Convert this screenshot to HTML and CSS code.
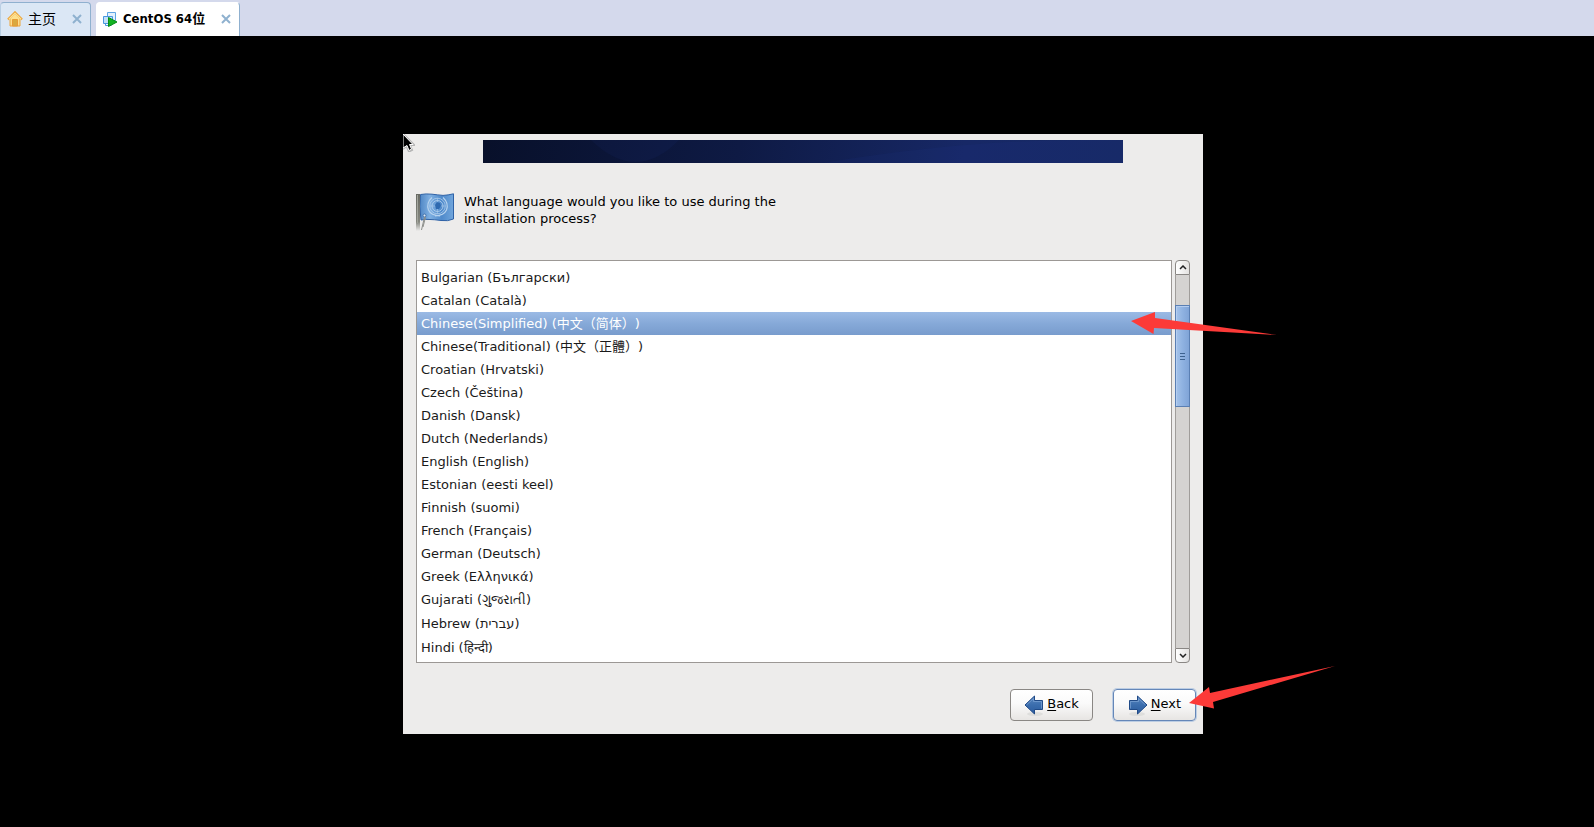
FILE: index.html
```html
<!DOCTYPE html>
<html lang="en">
<head>
<meta charset="utf-8">
<title>CentOS 64位</title>
<link rel="stylesheet" href="styles.css">
</head>
<body>
<nav class="tabs">
  <div class="tab">
    <svg class="tab-icon" viewBox="0 0 16 16" aria-hidden="true">
      <path d="M3 8v7h10V8L8 3z" fill="#fde08e" stroke="#eca53c"/>
      <path d="M1 8.500L8 1.500l7 7" fill="none" stroke="#eca53c" stroke-width="2.400"/>
      <path d="M2 8.200L8 2.300l6 5.900" fill="none" stroke="#fde39a" stroke-width="1.200"/>
      <path d="M5.500 8.500h5V15h-5z" fill="#d9a93f" stroke="#e79b35"/>
    </svg>
    <a class="tab-name" href="#home" lang="zh">主页</a>
    <button class="tab-close" aria-label="Close 主页"><svg viewBox="0 0 10 10"><path d="M1 1l8 8M9 1L1 9"/></svg></button>
  </div>
  <div class="tab tab-active">
    <svg class="tab-icon" viewBox="0 0 16 16" aria-hidden="true">
      <path d="M5.500 1.500h8v8h-8z" fill="#e4f1fd" stroke="#5fa5e4"/>
      <path d="M1.500 5.500h9v7h-9z" fill="#c3e0fa" stroke="#4a97de"/>
      <path d="M3.500 12.500v2h6" fill="none" stroke="#4a97de"/>
      <path d="M6.500 6.500v9L15 11z" fill="#12b321" stroke="#078b16"/>
    </svg>
    <a class="tab-name" href="#centos" lang="zh">CentOS 64位</a>
    <button class="tab-close" aria-label="Close CentOS 64位"><svg viewBox="0 0 10 10"><path d="M1 1l8 8M9 1L1 9"/></svg></button>
  </div>
</nav>
<main class="stage">
  <section class="dialog">
    <div class="banner"><svg viewBox="0 0 640 23" preserveAspectRatio="none" aria-hidden="true"><path d="M108 0q45 44 88 0z"/><path d="M340 23Q480 0 600 0h40v23z"/></svg></div>
    <header class="question">
      <svg class="flag" viewBox="0 0 38 38" aria-hidden="true">
        <defs>
          <linearGradient id="cloth" x2="1"><stop offset="0" stop-color="#4f86c4"/><stop offset=".3" stop-color="#7fb0e2"/><stop offset=".65" stop-color="#4f8acb"/><stop offset="1" stop-color="#71a6dc"/></linearGradient>
          <linearGradient id="pole" x2="0" y2="1"><stop offset="0" stop-color="#686a63"/><stop offset=".75" stop-color="#85877f"/><stop offset="1" stop-color="#85877f" stop-opacity="0"/></linearGradient>
        </defs>
        <path d="M4.500 1.500Q10 .5 16 1.200T27 2.400Q32 2.200 37.500 .8V26Q32 28.500 25 27.500T14 26.500Q9 26 5 27Q2.800 13 4.500 1.500z" fill="url(#cloth)" stroke="#2f62a6"/>
        <g fill="none" stroke="#b7d3ee" stroke-width="1.200">
          <circle cx="21.500" cy="13" r="5.500" stroke-width=".8"/>
          <circle cx="21.500" cy="13" r="7.800" stroke-width=".7"/>
          <path d="M16 4.500Q10 10 12.500 17Q15 22.500 24 23M27 4.500Q33 10 30.500 17Q28 22.500 19 23"/>
          <path d="M21.500 5v16M14 13h15" stroke-width=".5"/>
        </g>
        <path d="M19 12l2-3 3 1 1 3-2 3h-3z" fill="#2f6ab0"/>
        <rect x="0" y="1" width="4" height="37" fill="url(#pole)"/>
        <path d="M1.500 2v28" stroke="#a3a59c"/>
        <circle cx="8.500" cy="22.500" r="1.500" fill="#dce8f4" stroke="#4672a8"/>
        <path d="M8.500 24L5.500 37M9.500 24L7 34" stroke="#8c8e8a" fill="none"/>
      </svg>
      <p class="prompt">What language would you like to use during the installation process?</p>
    </header>
    <div class="picker">
      <ul class="list" role="listbox" aria-label="Language" tabindex="0">
        <li role="option">Bulgarian (Български)</li>
        <li role="option">Catalan (Català)</li>
        <li role="option" class="selected" aria-selected="true">Chinese(Simplified) (<span class="cjk">中文（简体）</span>)</li>
        <li role="option">Chinese(Traditional) (<span class="cjk">中文（正體）</span>)</li>
        <li role="option">Croatian (Hrvatski)</li>
        <li role="option">Czech (Čeština)</li>
        <li role="option">Danish (Dansk)</li>
        <li role="option">Dutch (Nederlands)</li>
        <li role="option">English (English)</li>
        <li role="option">Estonian (eesti keel)</li>
        <li role="option">Finnish (suomi)</li>
        <li role="option">French (Français)</li>
        <li role="option">German (Deutsch)</li>
        <li role="option">Greek (Ελληνικά)</li>
        <li role="option">Gujarati (ગુજરાતી)</li>
        <li role="option" class="tall">Hebrew (עברית)</li>
        <li role="option" class="tall">Hindi (हिन्दी)</li>
      </ul>
      <div class="scrollbar">
        <button class="step step-up" aria-label="Scroll up"><svg viewBox="0 0 8 5"><path d="M1 4l3-3 3 3"/></svg></button>
        <div class="track"><div class="thumb"><i></i><i></i><i></i></div></div>
        <button class="step step-down" aria-label="Scroll down"><svg viewBox="0 0 8 5"><path d="M1 1l3 3 3-3"/></svg></button>
      </div>
    </div>
    <footer class="actions">
      <button class="action">
        <svg class="action-icon" viewBox="0 0 20 22" aria-hidden="true">
          <defs><linearGradient id="blue" x2="0" y2="1"><stop offset="0" stop-color="#5c8ac2"/><stop offset=".5" stop-color="#3b6dad"/><stop offset="1" stop-color="#2b5c9f"/></linearGradient></defs>
          <ellipse cx="11" cy="20" rx="8" ry="2" fill="#dededc"/>
          <path d="M1 11L10.500 2V6.500h8v9h-8V20z" fill="url(#blue)" stroke="#204a87"/>
          <path d="M2.500 11L9.500 4.500v3h8v7" fill="none" stroke="#7ca4d4" stroke-width=".7"/>
        </svg><span><u>B</u>ack</span>
      </button>
      <button class="action action-default">
        <svg class="action-icon" viewBox="0 0 20 22" aria-hidden="true">
          <ellipse cx="9" cy="20" rx="8" ry="2" fill="#dededc"/>
          <path d="M19 11L9.500 2V6.500h-8v9h8V20z" fill="url(#blue)" stroke="#204a87"/>
          <path d="M2.500 14.500v-7h8v-3L17.500 11" fill="none" stroke="#7ca4d4" stroke-width=".7"/>
        </svg><span><u>N</u>ext</span>
      </button>
    </footer>
    <svg class="cursor" viewBox="0 0 12 18" aria-hidden="true">
      <path d="M0 0L11 11H7L9 16l-3 1.500L3.500 12 0 15" fill="#a9a9a9" stroke="#b5b5b5" stroke-width="2"/>
      <path d="M0 0L10 10.500H6.500L8.500 15l-2.500 1.500L4 11.500 0 14z" stroke="#fff"/>
    </svg>
    <svg class="arrow arrow-row" viewBox="0 0 146 23" aria-hidden="true"><path d="M0 9L24 0V6L146 23 23 16 22.500 22z"/></svg>
    <svg class="arrow arrow-next" viewBox="0 0 146 43" aria-hidden="true"><path d="M0 37L20 21 21 27 146 0 24 36 25 42.500z"/></svg>
  </section>
</main>
</body>
</html>
```
FILE: styles.css
```css
* { box-sizing: border-box; }

body {
  margin: 0;
  min-height: 100vh;
  display: flex;
  flex-direction: column;
  background: #000;
  font-family: "DejaVu Sans", "Noto Sans CJK SC", sans-serif;
  font-size: 13px;
  color: #1a1a1a;
}

button { font: inherit; color: inherit; padding: 0; margin: 0; }

.tabs {
  display: flex;
  gap: 5px;
  height: 36px;
  padding-top: 2px;
  background: #d4d9ec;
}

.tab {
  display: flex;
  align-items: center;
  padding: 0 8px 2px 6px;
  border: 1px solid #8fb0cf;
  border-bottom: 0;
  border-left-color: #b9cfe4;
  border-radius: 4px 4px 0 0;
  background: #dbe7f5;
}

.tab-active { padding-left: 5px; background: #fff; border-color: #fff #8fb0cf #fff #fff; }
.tab-active .tab-name { font-weight: bold; font-size: 13px; }
.tab-icon { width: 16px; height: 16px; margin-right: 5px; }

.tab-name {
  color: #000;
  text-decoration: none;
  font-family: "DejaVu Sans Condensed", "Noto Sans CJK SC", sans-serif;
  font-size: 14px;
  line-height: 18px;
}

.tab-close {
  display: flex;
  margin-left: 16px;
  border: 0;
  background: none;
}
.tab-close svg { width: 10px; height: 10px; stroke: #8fb1cf; stroke-width: 2; }

.stage {
  flex: 1;
  display: flex;
  align-items: center;
  justify-content: center;
  padding: 5px 0 0 12px;
}

.dialog {
  position: relative;
  width: 100%;
  max-width: 800px;
  padding: 6px 7px 13px 13px;
  background: #edeceb;
}

.banner {
  height: 23px;
  margin: 0 73px 0 67px;
  background: linear-gradient(100deg, #08102a, #0e1a44 40%, #172866 75%, #162963);
}
.banner svg { display: block; width: 100%; height: 100%; fill: #2646a0; fill-opacity: .08; }

.question {
  display: flex;
  gap: 10px;
  height: 97px;
  padding-top: 30px;
}
.flag { width: 38px; height: 38px; }
.prompt { margin: 0; max-width: 330px; line-height: 17px; color: #000; }

.picker { display: flex; gap: 3px; margin-right: 6px; }

.list {
  flex: 1;
  margin: 0;
  padding: 5px 0 4px;
  list-style: none;
  border: 1px solid #9c9895;
  background: #fff;
  outline: none;
}
.list li { height: 23px; padding-left: 4px; line-height: 23px; white-space: nowrap; }
.list .tall { height: 24px; line-height: 25px; }
.list .tall:last-child { height: 23px; }
.list .selected { color: #fff; background: linear-gradient(#9bbae5, #86a9d8 50%, #789ccd); }
.cjk {
  font-family: "Noto Sans CJK SC", sans-serif;
  line-height: 1;
  text-spacing-trim: space-all;
}

.scrollbar { display: flex; flex-direction: column; width: 15px; }
.step {
  display: flex;
  align-items: center;
  justify-content: center;
  height: 15px;
  border: 1px solid #8a8784;
  background: linear-gradient(90deg, #fff, #e4e2e0);
}
.step-up { border-radius: 4px 4px 0 0; }
.step-down { border-radius: 0 0 4px 4px; }
.step svg { width: 8px; height: 5px; fill: none; stroke: #222; stroke-width: 1.5; }
.track {
  flex: 1;
  padding-top: 30px;
  border: solid #a09d9a;
  border-width: 0 1px;
  background: #d5d3d1;
}
.thumb {
  display: flex;
  flex-direction: column;
  align-items: center;
  justify-content: center;
  gap: 2px;
  height: 102px;
  margin: 0 -1px;
  border: 1px solid #5a7fb3;
  background: linear-gradient(90deg, #a5c3ea, #8fb2e1 50%, #80a4d7);
  box-shadow: inset 1px 1px #b4cdef;
}
.thumb i { width: 5px; height: 1px; background: #3d628f; }

.actions { display: flex; justify-content: flex-end; gap: 20px; margin-top: 26px; }
.action {
  display: flex;
  align-items: center;
  justify-content: center;
  gap: 3px;
  width: 83px;
  height: 32px;
  border: 1px solid #8a8784;
  border-radius: 4px;
  background: linear-gradient(#fff, #fafafa 45%, #e7e5e3);
  color: #000;
  font-size: 13px;
  line-height: 16px;
}
.action span { padding-bottom: 2px; }
.action-default { border-color: #6587b8; box-shadow: 0 0 0 1px #bccde3; }
.action-icon { width: 20px; height: 22px; }
.action u { text-underline-offset: 2px; }

.cursor { position: absolute; top: 0; left: 0; width: 12px; height: 18px; }
.arrow { position: absolute; width: 146px; fill: #fc3a38; }
.arrow-row { top: 178px; left: 728px; height: 23px; }
.arrow-next { top: 532px; left: 786px; height: 43px; }
```
